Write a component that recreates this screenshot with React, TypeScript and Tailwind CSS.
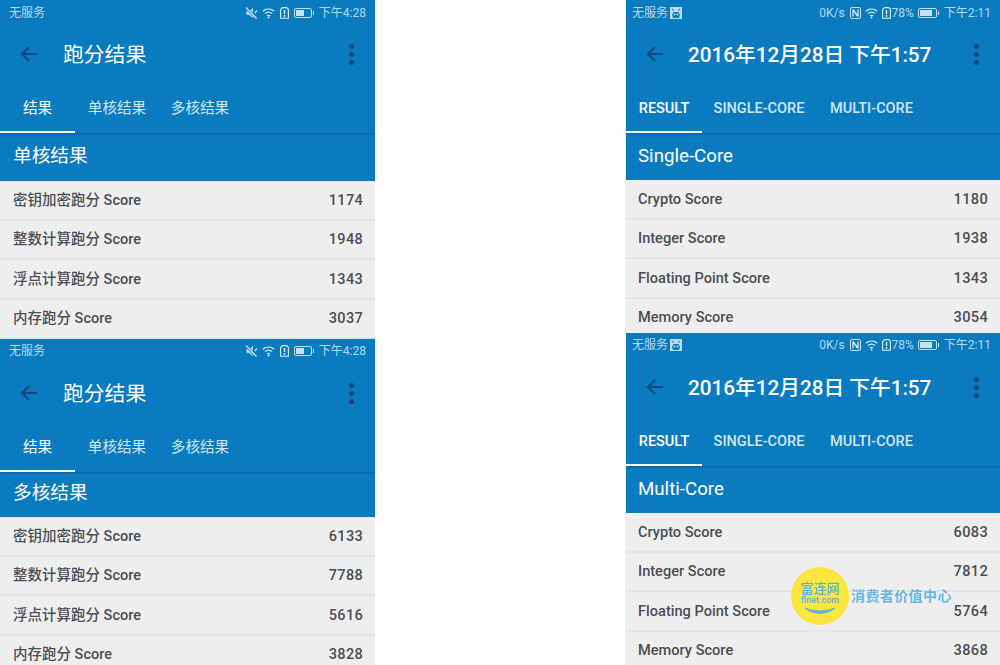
import React from "react";

const font = "font-['Roboto','Noto_Sans_CJK_SC',sans-serif]";

const StatusIcon = {
  mute: (
    <svg width="13" height="12" viewBox="0 0 13 12" fill="none">
      <path d="M1.5 4.2h2.2L8 1v10L3.7 7.8H1.5z" fill="#c8e2f2" />
      <path d="M1 .5l10.5 11" stroke="#0a7bbf" strokeWidth="3" />
      <path d="M1 .5l10.5 11" stroke="#c8e2f2" strokeWidth="1.4" />
      <path d="M12 3.5L9.8 6" stroke="#c8e2f2" strokeWidth="1.2" />
    </svg>
  ),
  wifi: (
    <svg width="13" height="11" viewBox="0 0 13 11" fill="none" stroke="#dcedf7" strokeWidth="1.2">
      <path d="M.8 3.2C4.2.3 8.8.3 12.2 3.2" />
      <path d="M2.9 5.6c2.1-1.7 5.1-1.7 7.2 0" />
      <path d="M4.9 7.8c1-.7 2.2-.7 3.2 0" />
      <circle cx="6.5" cy="9.6" r="1" fill="#dcedf7" stroke="none" />
    </svg>
  ),
  sim: (
    <svg width="9" height="12" viewBox="0 0 9 12" fill="none">
      <path d="M2.5.6h4.2l1.7 1.7v9H.6V2.5z" stroke="#dcedf7" strokeWidth="1.1" />
      <path d="M4.5 3v4" stroke="#dcedf7" strokeWidth="1.4" />
      <circle cx="4.5" cy="9" r=".9" fill="#dcedf7" />
    </svg>
  ),
  nfc: (
    <svg width="11" height="12" viewBox="0 0 11 12" fill="none">
      <rect x=".5" y=".5" width="10" height="11" rx="1.5" fill="#0a7bbf" stroke="#c9e3f3" />
      <path d="M3 2.5v7M3 2.5l5 7M8 2.5v7" stroke="#dcedf7" strokeWidth="1.3" />
    </svg>
  ),
  sleep: (
    <svg width="12" height="12" viewBox="0 0 12 12">
      <rect width="12" height="12" fill="#bcdcf0" />
      <path d="M1.5 1l3 2.5H2.5zM10.5 1l-3 2.5h2zM3.5 5h5l1.5 3-1 3H3l-1-3z" fill="#0a7bbf" />
      <circle cx="4.5" cy="7.5" r="1" fill="#bcdcf0" />
      <circle cx="7.5" cy="7.5" r="1" fill="#bcdcf0" />
    </svg>
  ),
};

function Battery({ level, wide }: { level: number; wide?: boolean }) {
  return (
    <div className="flex items-center">
      <div className={`${wide ? "w-[19px]" : "w-[18px]"} h-[10px] border border-[#c4e0f1] rounded-[2px] p-px flex`}>
        <div className="h-full bg-[#c4e0f1]" style={{ width: `${level}%` }} />
      </div>
      <div className="w-px h-[4px] ml-px bg-[#c4e0f1]" />
    </div>
  );
}

function Watermark() {
  return (
    <div className="absolute left-[791px] top-[567px] flex items-center">
      <div className="w-[58px] h-[58px] rounded-full bg-[#fbe63f] flex flex-col items-center pt-[15px]">
        <span className="text-[13px] leading-[13px] font-medium text-[#5cb0dc]">富连网</span>
        <span className="text-[9px] leading-[11px] font-medium text-[#5cb0dc]">flnet.com</span>
        <svg width="32" height="9" viewBox="0 0 32 9" className="mt-[1px]">
          <path d="M1 1c8 7 22 7 30 0-8 4-22 4-30 0z" fill="#58aee6" stroke="#58aee6" strokeWidth="1" />
        </svg>
      </div>
      <span className="ml-[2px] text-[14px] leading-none font-bold tracking-[0.4px] text-[#6ab6e8]">消费者价值中心</span>
    </div>
  );
}

type Panel = {
  height: string;
  statusPad: string;
  headingPad: string;
  chinese: boolean;
  heading: string;
  headerH: string;
  rows: [string, string][];
};

function ScorePanel({ p }: { p: Panel }) {
  return (
    <section className={`${p.height} overflow-hidden bg-[#eeeeee] ${p.chinese ? "" : "border-l border-[#e8f2f8]"}`}>
      <div className="bg-[#0a7bbf]">
        <div className={`h-[26px] ${p.statusPad} flex items-center justify-between ${p.chinese ? "pl-[9px]" : "pl-[6px]"} pr-[9px] text-[12px] text-[#b5d9ee]`}>
          {p.chinese ? (
            <span>无服务</span>
          ) : (
            <span className="flex items-center gap-[2px]">无服务{StatusIcon.sleep}</span>
          )}
          {p.chinese ? (
            <div className="flex items-center gap-[4px]">
              {StatusIcon.mute}
              {StatusIcon.wifi}
              <span className="ml-[1px] flex">{StatusIcon.sim}</span>
              <span className="ml-[1px] flex"><Battery level={60} /></span>
              <span className="ml-[1px] text-[12px]">下午4:28</span>
            </div>
          ) : (
            <div className="flex items-center gap-[4px]">
              <span className="mr-[1px]">0K/s</span>
              {StatusIcon.nfc}
              {StatusIcon.wifi}
              {StatusIcon.sim}
              <span className="-ml-[3px]">78%</span>
              <Battery level={78} wide />
              <span className="ml-[1px]">下午2:11</span>
            </div>
          )}
        </div>
        <div className="h-[56px] flex items-center">
          <svg width="18" height="18" viewBox="0 0 18 18" fill="none" stroke="#0f4a7c" strokeWidth="2" className="ml-[20px] shrink-0">
            <path d="M17 9H2M9 2L2 9l7 7" />
          </svg>
          <h1 className={`mt-[3px] ${p.chinese ? "ml-[25px] text-[20.8px] font-normal" : "ml-[24px] text-[20.7px] font-medium"} text-white whitespace-nowrap`}>
            {p.chinese ? "跑分结果" : "2016年12月28日 下午1:57"}
          </h1>
          <div className="ml-auto mr-[21px] flex flex-col gap-[3px]">
            <i className="block w-[5px] h-[5px] rounded-full bg-[#0f4a7c]" />
            <i className="block w-[5px] h-[5px] rounded-full bg-[#0f4a7c]" />
            <i className="block w-[5px] h-[5px] rounded-full bg-[#0f4a7c]" />
          </div>
        </div>
        <div className="h-[51px] flex shadow-[0_1px_2px_rgba(0,40,80,0.35)] relative">
          {p.chinese ? (
            <>
              <div className="w-[75px] border-b-2 border-white flex items-center justify-center text-white text-[14.6px] pt-[5px]">结果</div>
              <div className="w-[84px] flex items-center justify-center text-[#cfe6f4] text-[14.6px] pt-[3px]">单核结果</div>
              <div className="w-[82px] flex items-center justify-center text-[#cfe6f4] text-[14.6px] pt-[3px]">多核结果</div>
            </>
          ) : (
            <>
              <div className="w-[76px] border-b-2 border-white flex items-center justify-center text-white text-[14.5px] font-medium pt-[5px]">RESULT</div>
              <div className="w-[116px] -ml-[1px] flex items-center justify-center text-[#cfe6f4] text-[14.5px] font-medium pt-[3px]">SINGLE-CORE</div>
              <div className="w-[109px] flex items-center justify-center text-[#cfe6f4] text-[14.5px] font-medium pt-[3px]">MULTI-CORE</div>
            </>
          )}
        </div>
        <div className={`${p.headerH} ${p.headingPad} flex items-center ${p.chinese ? "pl-[13px]" : "pl-[12px]"} text-[18.7px] text-white`}>
          {p.heading}
        </div>
      </div>
      {p.rows.map(([label, score]) => (
        <div
          key={label}
          className={`h-[39.5px] pt-[2px] flex items-center justify-between ${p.chinese ? "pl-[13px] text-[14.5px]" : "pl-[12px] text-[14.6px]"} pr-[12px] font-medium text-[#4c4f53] border-b-2 border-[#e5e5e5]`}
        >
          <span>{label}</span>
          <span className="tracking-[0.3px]">{score}</span>
        </div>
      ))}
    </section>
  );
}

const left: Panel[] = [
  {
    height: "h-[339px]",
    statusPad: "",
    headingPad: "pb-[2px]",
    chinese: true,
    heading: "单核结果",
    headerH: "h-[48px]",
    rows: [
      ["密钥加密跑分 Score", "1174"],
      ["整数计算跑分 Score", "1948"],
      ["浮点计算跑分 Score", "1343"],
      ["内存跑分 Score", "3037"],
    ],
  },
  {
    height: "h-[326px]",
    statusPad: "pb-[2px]",
    headingPad: "pb-[2px]",
    chinese: true,
    heading: "多核结果",
    headerH: "h-[45px]",
    rows: [
      ["密钥加密跑分 Score", "6133"],
      ["整数计算跑分 Score", "7788"],
      ["浮点计算跑分 Score", "5616"],
      ["内存跑分 Score", "3828"],
    ],
  },
];

const right: Panel[] = [
  {
    height: "h-[333px]",
    statusPad: "",
    headingPad: "pb-[1px]",
    chinese: false,
    heading: "Single-Core",
    headerH: "h-[47px]",
    rows: [
      ["Crypto Score", "1180"],
      ["Integer Score", "1938"],
      ["Floating Point Score", "1343"],
      ["Memory Score", "3054"],
    ],
  },
  {
    height: "h-[332px]",
    statusPad: "pb-[2px]",
    headingPad: "pb-[1px]",
    chinese: false,
    heading: "Multi-Core",
    headerH: "h-[47px]",
    rows: [
      ["Crypto Score", "6083"],
      ["Integer Score", "7812"],
      ["Floating Point Score", "5764"],
      ["Memory Score", "3868"],
    ],
  },
];

export default function App() {
  return (
    <div className={`relative w-[1000px] h-[665px] overflow-hidden bg-white flex justify-between ${font}`}>
      <div className="w-[375px]">
        {left.map((p) => (
          <ScorePanel key={p.heading} p={p} />
        ))}
      </div>
      <div className="w-[375px]">
        {right.map((p) => (
          <ScorePanel key={p.heading} p={p} />
        ))}
      </div>
      <Watermark />
    </div>
  );
}
